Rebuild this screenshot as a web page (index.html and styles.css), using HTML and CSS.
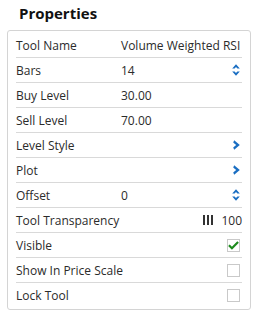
FILE: index.html
```html
<!DOCTYPE html>
<html lang="en">
<head>
    <meta charset="UTF-8">
    <title>Properties</title>
    <link rel="stylesheet" href="styles.css">
</head>
<body>
    <h2 class="panel-title">Properties</h2>

    <div class="props-card">
        <div class="prop-row">
            <span class="prop-label">Tool Name</span>
            <span class="prop-value">Volume Weighted RSI</span>
        </div>
        <div class="prop-row">
            <span class="prop-label">Bars</span>
            <span class="prop-value">14</span>
            <span class="prop-ctrl">
                <svg class="spin-icon" viewBox="0 0 8 12" width="8" height="12"><path d="M4 0.3 L7.8 4.6 L5.4 4.6 L4 3 L2.6 4.6 L0.2 4.6 Z M4 11.7 L7.8 7.4 L5.4 7.4 L4 9 L2.6 7.4 L0.2 7.4 Z"/></svg>
            </span>
        </div>
        <div class="prop-row">
            <span class="prop-label">Buy Level</span>
            <span class="prop-value">30.00</span>
        </div>
        <div class="prop-row">
            <span class="prop-label">Sell Level</span>
            <span class="prop-value">70.00</span>
        </div>
        <div class="prop-row">
            <span class="prop-label">Level Style</span>
            <span class="prop-ctrl">
                <svg class="arrow-icon" viewBox="0 0 7 10" width="7" height="10"><path d="M1.2 0.3 L6.8 5 L1.2 9.7 L0.2 7.4 L3.2 5 L0.2 2.6 Z"/></svg>
            </span>
        </div>
        <div class="prop-row">
            <span class="prop-label">Plot</span>
            <span class="prop-ctrl">
                <svg class="arrow-icon" viewBox="0 0 7 10" width="7" height="10"><path d="M1.2 0.3 L6.8 5 L1.2 9.7 L0.2 7.4 L3.2 5 L0.2 2.6 Z"/></svg>
            </span>
        </div>
        <div class="prop-row">
            <span class="prop-label">Offset</span>
            <span class="prop-value">0</span>
            <span class="prop-ctrl">
                <svg class="spin-icon" viewBox="0 0 8 12" width="8" height="12"><path d="M4 0.3 L7.8 4.6 L5.4 4.6 L4 3 L2.6 4.6 L0.2 4.6 Z M4 11.7 L7.8 7.4 L5.4 7.4 L4 9 L2.6 7.4 L0.2 7.4 Z"/></svg>
            </span>
        </div>
        <div class="prop-row">
            <span class="prop-label">Tool Transparency</span>
            <span class="prop-ctrl transparency">
                <span class="bars-glyph"><i></i><i></i><i></i></span>
                <span class="trans-num">100</span>
            </span>
        </div>
        <div class="prop-row">
            <span class="prop-label">Visible</span>
            <span class="prop-ctrl">
                <span class="checkbox checked">
                    <svg viewBox="0 0 12 10" width="12" height="10"><path d="M1 5.2 L4.3 8.5 L11 1.8" fill="none" stroke="#1d8a1d" stroke-width="2.4"/></svg>
                </span>
            </span>
        </div>
        <div class="prop-row">
            <span class="prop-label">Show In Price Scale</span>
            <span class="prop-ctrl"><span class="checkbox"></span></span>
        </div>
        <div class="prop-row">
            <span class="prop-label">Lock Tool</span>
            <span class="prop-ctrl"><span class="checkbox"></span></span>
        </div>
    </div>
</body>
</html>
```

FILE: styles.css
```css
/* Base page */
body {
    margin: 0;
    padding: 0 5px 0 7px;
    font-family: "Open Sans", sans-serif;
    font-size: 12px;
    color: #2b2b2b;
    background: #fff;
}

.panel-title {
    margin: 0;
    padding: 3px 0 0 12px;
    height: 30px;
    box-sizing: border-box;
    font-size: 15px;
    font-weight: 700;
    color: #111;
}

/* Card holding all property rows */
.props-card {
    border: 1px solid #d4d4d4;
    border-radius: 3px;
    padding: 2px 8px 1px 8px;
    width: 244px;
    box-sizing: border-box;
}

.prop-row {
    display: flex;
    align-items: center;
    height: 25px;
    box-sizing: border-box;
    border-bottom: 1px solid #d9d9d9;
}

.prop-row:last-child {
    border-bottom: none;
}

.prop-label {
    width: 105px;
    flex-shrink: 0;
    white-space: nowrap;
}

.prop-value {
    flex: 1;
    white-space: nowrap;
}

.prop-ctrl {
    margin-left: auto;
    display: flex;
    align-items: center;
    padding-right: 2px;
}

.spin-icon, .arrow-icon {
    fill: #1a6ec2;
}

.transparency {
    gap: 8px;
    padding-right: 0;
}

.bars-glyph {
    display: flex;
    gap: 2px;
}

.bars-glyph i {
    display: block;
    width: 2px;
    height: 10px;
    background: #333;
}

.checkbox {
    display: flex;
    align-items: center;
    justify-content: center;
    width: 11px;
    height: 11px;
    border: 1px solid #c9c9c9;
    background: #fff;
}
```
